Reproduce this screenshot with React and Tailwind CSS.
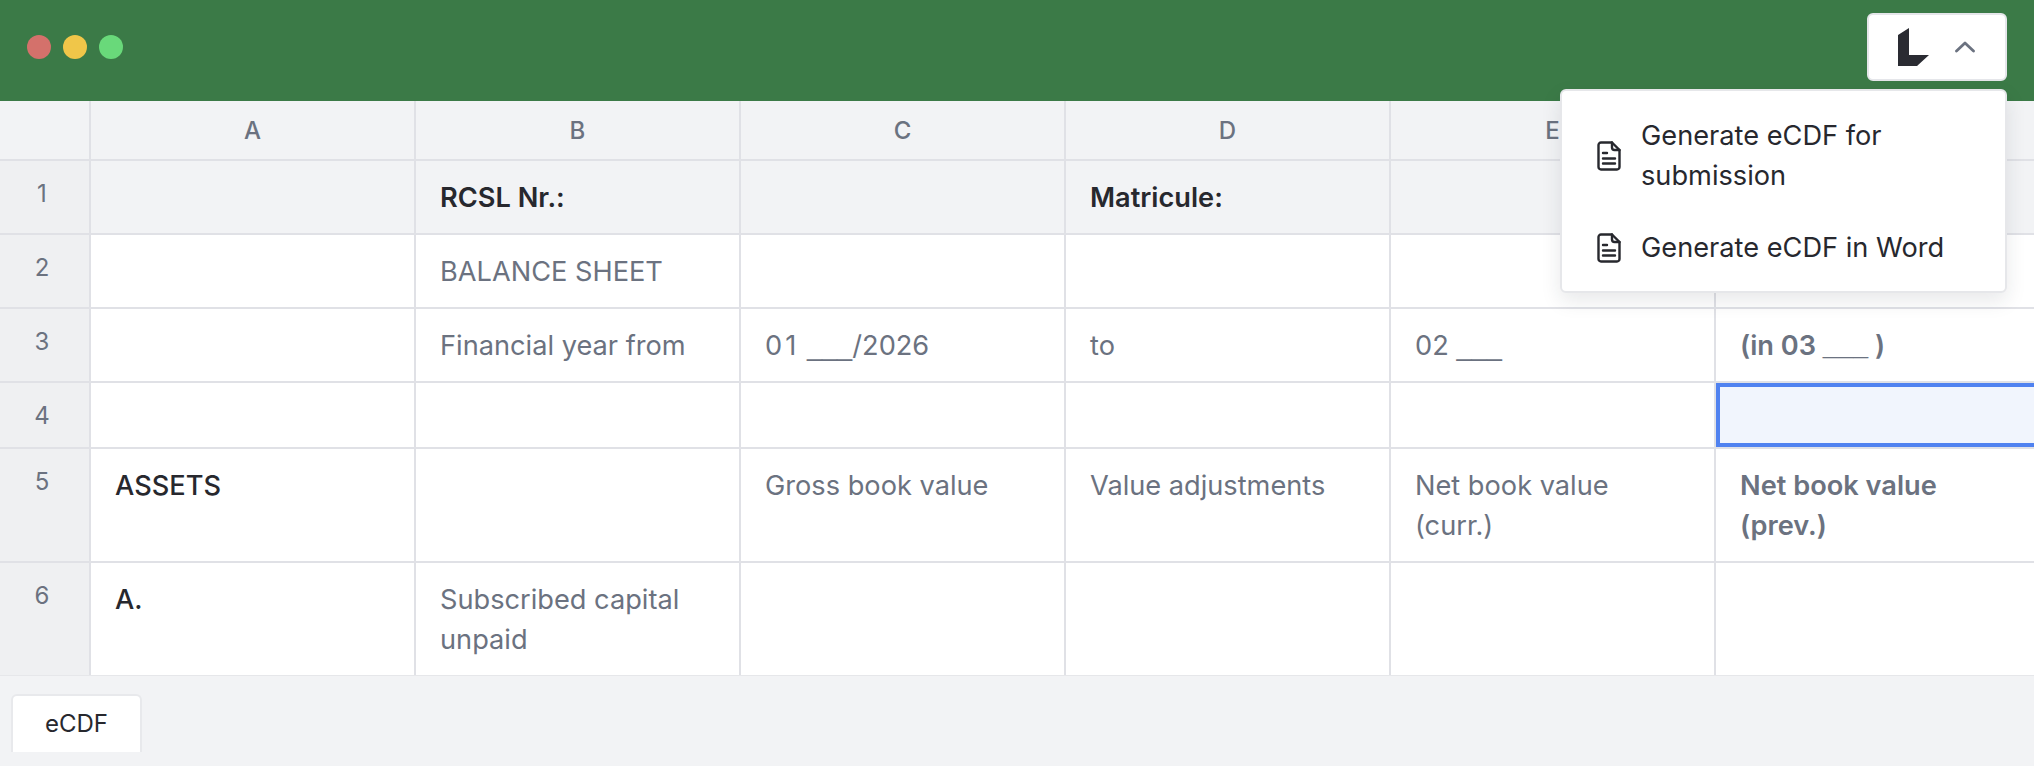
const U = () => <span className="font-['Liberation_Sans',sans-serif]">___</span>;

const rows = [
  { n: "1", h: "h-[74px]", shaded: true, cells: ["", "RCSL Nr.:", "", "Matricule:", "", ""], styles: ["", "b", "", "b", "", ""] },
  { n: "2", h: "h-[74px]", cells: ["", "BALANCE SHEET", "", "", "", ""], styles: [] },
  { n: "3", h: "h-[74px]", cells: ["", "Financial year from", <><span className="tracking-[3px]">01</span> <U />/2026</>, "to", <>02 <U /></>, <>(in 03 <U /> )</>], styles: ["", "", "", "", "", "g"] },
  { n: "4", h: "h-[66px]", cells: ["", "", "", "", "", ""], styles: [], selected: 5 },
  { n: "5", h: "h-[114px]", cells: ["ASSETS", "", "Gross book value", "Value adjustments", "Net book value (curr.)", "Net book value (prev.)"], styles: ["d", "", "", "", "", "g"] },
  { n: "6", h: "h-[112px]", last: true, cells: ["A.", "Subscribed capital unpaid", "", "", "", ""], styles: ["d"] },
];

function cellClass(style) {
  if (style === "b") return "font-semibold text-[#27282e]";
  if (style === "d") return "font-medium text-[#27282e]";
  if (style === "g") return "font-semibold text-[#6b7280]";
  return "text-[#6b7280]";
}

function DocIcon() {
  return (
    <svg width="24" height="30" viewBox="0 0 24 30" fill="none" stroke="#27282e" strokeWidth="2.4" strokeLinecap="round" strokeLinejoin="round" className="shrink-0">
      <path d="M15 1.5H4A2.5 2.5 0 0 0 1.5 4v22A2.5 2.5 0 0 0 4 28.5h16a2.5 2.5 0 0 0 2.5-2.5V9z" />
      <path d="M15 1.5V6.5A2.5 2.5 0 0 0 17.5 9H22.5" />
      <path d="M6 12h4M6 17.5h12M6 22.5h12" />
    </svg>
  );
}

export default function App() {
  return (
    <div className="relative w-[2034px] h-[766px] overflow-hidden bg-[#f2f3f5] font-['Inter',sans-serif] text-[27.2px] leading-[40px]">
      <header className="h-[101px] bg-[#3b7a47] flex items-center justify-between pl-[27px] pr-[27px]">
        <div className="flex gap-[12px] -mt-[8px]">
          <span className="w-6 h-6 rounded-full bg-[#d4716b]" />
          <span className="w-6 h-6 rounded-full bg-[#f0c649]" />
          <span className="w-6 h-6 rounded-full bg-[#69d97a]" />
        </div>
        <div className="w-[140px] h-[68px] -mt-[7px] rounded-[6px] bg-white border-2 border-[#e5e6ea] flex items-center pl-[29px] gap-[25px]">
          <svg width="32" height="38" viewBox="0 0 32 38" fill="#2a2b32"><path d="M0 7 L11 0 V27 H31 L19 38 H0 Z" /></svg>
          <svg width="20" height="12" viewBox="0 0 20 12" fill="none" stroke="#6b7280" strokeWidth="2.8" strokeLinecap="round" strokeLinejoin="round"><path d="M1.5 10 L10 2 L18.5 10" /></svg>
        </div>
      </header>

      <div className="grid grid-cols-[91px_repeat(6,325px)] h-[574px] overflow-hidden">
        <div className="h-[60px] bg-[#f2f3f5] border-r-2 border-b-2 border-[#e0e1e6]" />
        {["A", "B", "C", "D", "E", "F"].map((c) => (
          <div key={c} className="h-[60px] bg-[#f2f3f5] border-r-2 border-b-2 border-[#e0e1e6] flex items-center justify-center pt-[2px] text-[24px] font-medium text-[#6b7280]">{c}</div>
        ))}
        {rows.map((r) => (
          <div key={r.n} className="contents">
            <div className={`${r.h} bg-[#eff0f2] border-r-2 border-[#e0e1e6] text-center pt-[13px] pr-[5px] text-[24px] text-[#6b7280] ${r.last ? "" : "border-b-2"}`}>{r.n}</div>
            {r.cells.map((t, i) => (
              <div key={i} className={`${r.h} ${r.shaded ? "bg-[#f2f3f5]" : "bg-white"} border-r-2 border-[#e0e1e6] ${r.last ? "" : "border-b-2"} pl-[24px] pr-[24px] pt-[17px]`}>
                {r.selected === i ? (
                  <div className="-ml-[24px] -mr-[24px] -mt-[17px] h-[64px] bg-[#f1f5fd] border-[4px] border-[#5082f0]" />
                ) : (
                  <span className={cellClass(r.styles[i])}>{t}</span>
                )}
              </div>
            ))}
          </div>
        ))}
      </div>

      <div className="h-[91px] pl-[11px] pt-[18px] border-t-2 border-[#e6e7ea] -mt-[1px]">
        <div className="w-[131px] h-[58px] bg-white rounded-t-[6px] border-2 border-b-0 border-[#e8e9ec] flex items-center justify-center text-[24px] text-[#27282e]">eCDF</div>
      </div>

      <div className="absolute left-[1560px] top-[89px] w-[447px] h-[204px] bg-white rounded-[6px] border-2 border-[#e6e7ea] shadow-[0_8px_20px_rgba(30,35,50,0.10)] text-[#27282e]">
        <div className="flex items-center gap-[20px] pl-[35px] pt-[25px]">
          <DocIcon />
          <span className="w-[290px]">Generate eCDF for submission</span>
        </div>
        <div className="flex items-center gap-[20px] pl-[35px] pt-[32px]">
          <DocIcon />
          <span>Generate eCDF in Word</span>
        </div>
      </div>
    </div>
  );
}
